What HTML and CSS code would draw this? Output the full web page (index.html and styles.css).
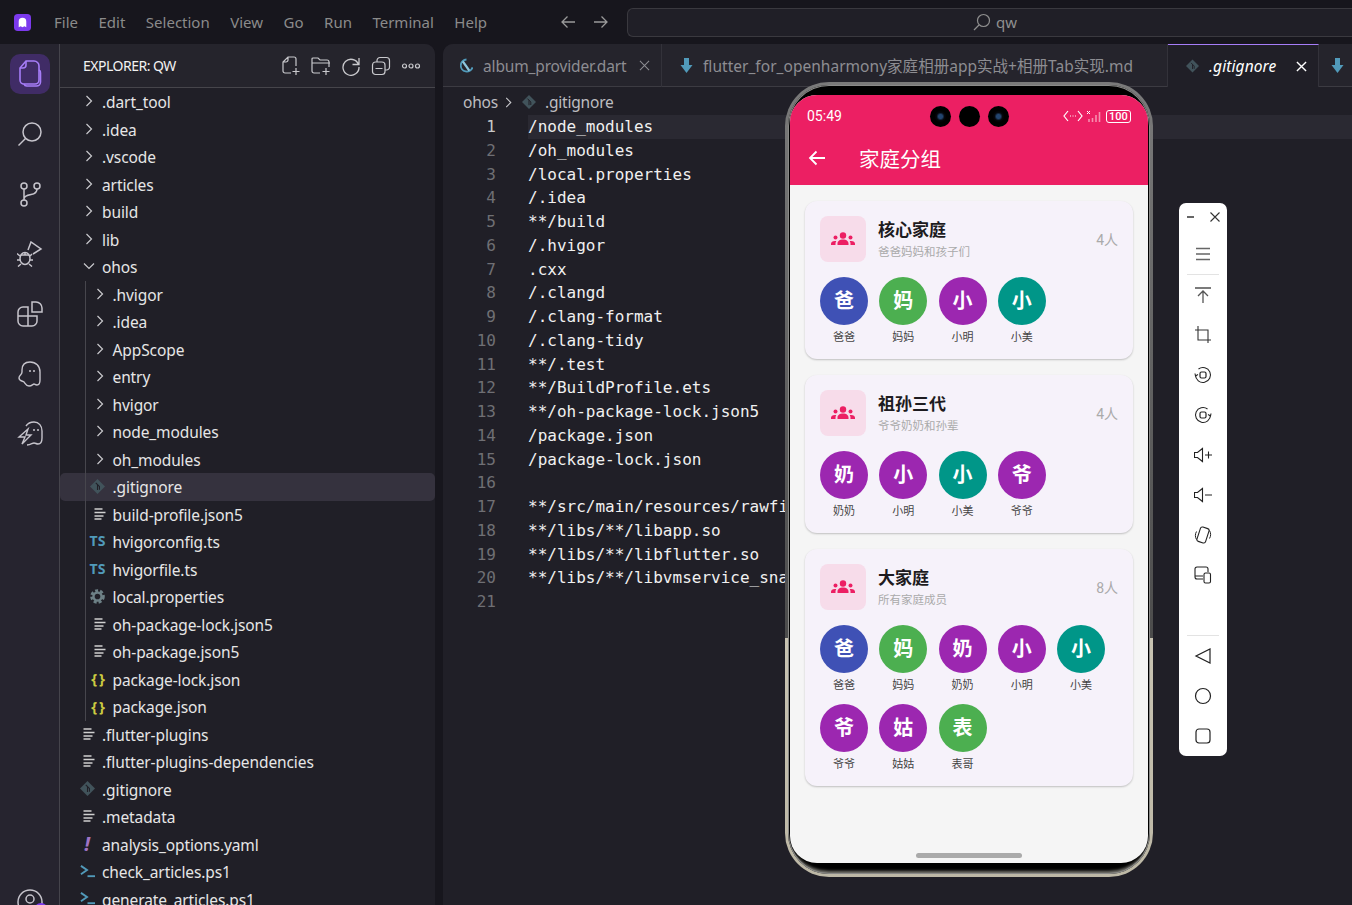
FILE: index.html
```html
<!DOCTYPE html>
<html lang="en">
<head>
    <meta charset="UTF-8">
    <meta name="viewport" content="width=device-width, initial-scale=1.0">
    <title>qw - Editor</title>
    <link rel="stylesheet" href="styles.css">
</head>
<body>
    <svg class="sprite" xmlns="http://www.w3.org/2000/svg">
        <symbol id="i-right" viewBox="0 0 12 12"><path d="M3.5 1l5 5-5 5" fill="none" stroke="currentColor" stroke-width="1.2"/></symbol>
        <symbol id="i-down" viewBox="0 0 12 12"><path d="M1 3.5l5 5 5-5" fill="none" stroke="currentColor" stroke-width="1.2"/></symbol>
        <symbol id="i-lines" viewBox="0 0 12 12"><path d="M0.500 1h8M0.500 4.500h11M0.500 8h9M0.500 11h7" fill="none" stroke="#cfcfcf" stroke-width="1.500"/></symbol>
        <symbol id="i-git" viewBox="0 0 14 14"><path d="M7 0l7 7-7 7-7-7z" fill="#41535b"/><path d="M5.4 3.6l3.4 3.4v3M7 5.2v5" fill="none" stroke="#201f27" stroke-width="1"/></symbol>
        <symbol id="i-gear" viewBox="0 0 16 16"><circle cx="8" cy="8" r="6" fill="none" stroke="#6d8086" stroke-width="3.600" stroke-dasharray="3 2.030"/><circle cx="8" cy="8" r="4.300" fill="none" stroke="#6d8086" stroke-width="2.600"/></symbol>
        <symbol id="i-ps" viewBox="0 0 16 14"><path d="M1 1l6.500 4.500L1 10" fill="none" stroke="#519aba" stroke-width="2"/><path d="M8 12h8" stroke="#519aba" stroke-width="2"/></symbol>
        <symbol id="i-md" viewBox="0 0 12 16"><path d="M3.500 0h5v7H12l-6 8-6-8h3.500z" fill="#519aba"/></symbol>
        <symbol id="i-group" viewBox="0 0 24 14"><circle cx="12" cy="3.500" r="3.200"/><circle cx="4.500" cy="5.500" r="2"/><circle cx="19.500" cy="5.500" r="2"/><path d="M6.500 13v-1.500c0-2.500 2.500-4 5.500-4s5.500 1.500 5.500 4V13zM0 13v-1.200c0-1.600 1.400-2.800 4-2.800.5 0 .9 0 1.300.1-.5.700-.8 1.500-.8 2.400V13zM24 13v-1.200c0-1.600-1.400-2.800-4-2.800-.5 0-.9 0-1.300.1.500.700.8 1.500.8 2.400V13z"/></symbol>
    </svg>

    <header class="topbar">
        <svg class="logo" viewBox="0 0 18 18"><rect width="18" height="18" rx="4" fill="#7c3aed"/><path d="M5 14V8a4 4 0 0 1 8 0v6l-2-1-2 1-2-1z" fill="#fff"/></svg>
        <nav class="menu">
            <span>File</span><span>Edit</span><span>Selection</span><span>View</span><span>Go</span><span>Run</span><span>Terminal</span><span>Help</span>
        </nav>
        <div class="history">
            <svg viewBox="0 0 16 16"><path d="M15 8H2M7.500 2.500L2 8l5.500 5.500" fill="none" stroke="currentColor" stroke-width="1.300"/></svg>
            <svg viewBox="0 0 16 16"><path d="M1 8h13M8.500 2.500L14 8l-5.500 5.500" fill="none" stroke="currentColor" stroke-width="1.300"/></svg>
        </div>
        <div class="searchbox">
            <svg viewBox="0 0 18 18"><circle cx="10.500" cy="7.500" r="6" fill="none" stroke="currentColor" stroke-width="1.200"/><path d="M6 12l-5 5" stroke="currentColor" stroke-width="1.200"/></svg>
            <span>qw</span>
        </div>
    </header>

    <div class="workbench">
        <aside class="activity">
            <div class="act act-on">
                <svg viewBox="0 0 24 28" width="24" height="28"><path d="M8 1h8a5 5 0 0 1 5 5v14a4 4 0 0 1-4 4H6a4 4 0 0 1-4-4V8z" fill="none" stroke="#a67df8" stroke-width="1.600"/><path d="M8 1v4a3 3 0 0 1-3 3H2" fill="none" stroke="#a67df8" stroke-width="1.600"/><path d="M21 10a3 3 0 0 1 1.500 3v9a4 4 0 0 1-4 4H9a3 3 0 0 1-3-2" fill="none" stroke="#a67df8" stroke-width="1.600"/></svg>
            </div>
            <div class="act">
                <svg viewBox="0 0 26 26" width="26" height="26"><circle cx="15" cy="11" r="9" fill="none" stroke="currentColor" stroke-width="1.500"/><path d="M8.500 17.500L1.500 24.500" stroke="currentColor" stroke-width="1.500"/></svg>
            </div>
            <div class="act">
                <svg viewBox="0 0 22 26" width="22" height="26"><circle cx="5" cy="5" r="3" fill="none" stroke="currentColor" stroke-width="1.500"/><circle cx="18" cy="5" r="3" fill="none" stroke="currentColor" stroke-width="1.500"/><circle cx="5" cy="22" r="3" fill="none" stroke="currentColor" stroke-width="1.500"/><path d="M5 8v11M18 8c0 4-3 5-6 5.500S5 15 5 18" fill="none" stroke="currentColor" stroke-width="1.500"/></svg>
            </div>
            <div class="act">
                <svg viewBox="0 0 26 26" width="26" height="26"><path d="M11 9l3-8 10 7-8 5" fill="none" stroke="currentColor" stroke-width="1.500"/><ellipse cx="8" cy="17.500" rx="5" ry="6" fill="none" stroke="currentColor" stroke-width="1.500"/><path d="M3 15L0 12.500M3 19H0M4 23l-3 2.500M13 15l2-2M13 19h3M12 23l3 2.500M4 14h8M8 12v2" fill="none" stroke="currentColor" stroke-width="1.500"/></svg>
            </div>
            <div class="act">
                <svg viewBox="0 0 26 26" width="26" height="26"><path d="M11 6H6a5 5 0 0 0-5 5v9a5 5 0 0 0 5 5h9a5 5 0 0 0 5-5v-5H11zM1 15h10M11 15v10" fill="none" stroke="currentColor" stroke-width="1.500"/><path d="M15 1h4a6 6 0 0 1 6 6v4H15z" fill="none" stroke="currentColor" stroke-width="1.500"/></svg>
            </div>
            <div class="act">
                <svg viewBox="0 0 24 26" width="24" height="26"><path d="M12 1c6 0 10 4 10 10v8c0 3-1 5-3 5s-2-1-3-1-2 2-5 2-4-3-5-4-5-1-5-4 3-3 3-6V9c0-5 3-8 8-8z" fill="none" stroke="currentColor" stroke-width="1.400"/><path d="M12 9v2M16 9v2" stroke="currentColor" stroke-width="1.500"/></svg>
            </div>
            <div class="act">
                <svg viewBox="0 0 26 26" width="26" height="26"><path d="M9 5c2-3 5-4 8-4 5 0 8 4 8 9v7c0 4-2 6-4 6s-2-1-4-1-3 2-7 2" fill="none" stroke="currentColor" stroke-width="1.400"/><path d="M11 8L2 16h6l-3 7 9-9H9z" fill="none" stroke="currentColor" stroke-width="1.400"/><path d="M17 8v2M21 8v2" stroke="currentColor" stroke-width="1.500"/></svg>
            </div>
            <div class="account">
                <svg viewBox="0 0 26 26" width="26" height="26"><circle cx="13" cy="13" r="12" fill="none" stroke="currentColor" stroke-width="1.500"/><circle cx="13" cy="10" r="4" fill="none" stroke="currentColor" stroke-width="1.500"/></svg>
                <i class="account-badge"></i>
            </div>
        </aside>

        <section class="explorer">
            <div class="explorer-head">
                <h2>EXPLORER: QW</h2>
                <div class="explorer-tools">
                    <svg viewBox="0 0 20 20"><path d="M10 17H4a2 2 0 0 1-2-2V6l5-5h6a2 2 0 0 1 2 2v7M7 1v3a2 2 0 0 1-2 2H2M15 12v7M11.500 15.500h7" fill="none" stroke="currentColor" stroke-width="1.200"/></svg>
                    <svg viewBox="0 0 20 20"><path d="M9 17H3a2 2 0 0 1-2-2V3a1 1 0 0 1 1-1h5l2 2h7a2 2 0 0 1 2 2v5M1 7h18M15 12v7M11.500 15.500h7" fill="none" stroke="currentColor" stroke-width="1.200"/></svg>
                    <svg viewBox="0 0 20 20"><path d="M17.500 8.500A8 8 0 1 0 18 11M18 2v6.500h-6.500" fill="none" stroke="currentColor" stroke-width="1.300"/></svg>
                    <svg viewBox="0 0 20 20"><rect x="1.500" y="6" width="12.500" height="12.500" rx="3" fill="none" stroke="currentColor" stroke-width="1.200"/><path d="M6 6V4.500a3 3 0 0 1 3-3h6.500a3 3 0 0 1 3 3V11a3 3 0 0 1-3 3H14M4.500 12.500h7" fill="none" stroke="currentColor" stroke-width="1.200"/></svg>
                    <svg viewBox="0 0 20 20"><circle cx="3.500" cy="10" r="2" fill="none" stroke="currentColor" stroke-width="1.200"/><circle cx="10" cy="10" r="2" fill="none" stroke="currentColor" stroke-width="1.200"/><circle cx="16.500" cy="10" r="2" fill="none" stroke="currentColor" stroke-width="1.200"/></svg>
                </div>
            </div>

            <div class="tree">
                <div class="row"><span class="slot"><svg class="chev"><use href="#i-right"/></svg></span>.dart_tool</div>
                <div class="row"><span class="slot"><svg class="chev"><use href="#i-right"/></svg></span>.idea</div>
                <div class="row"><span class="slot"><svg class="chev"><use href="#i-right"/></svg></span>.vscode</div>
                <div class="row"><span class="slot"><svg class="chev"><use href="#i-right"/></svg></span>articles</div>
                <div class="row"><span class="slot"><svg class="chev"><use href="#i-right"/></svg></span>build</div>
                <div class="row"><span class="slot"><svg class="chev"><use href="#i-right"/></svg></span>lib</div>
                <div class="row"><span class="slot"><svg class="chev"><use href="#i-down"/></svg></span>ohos</div>
                <div class="nested">
                    <div class="row"><span class="slot"><svg class="chev"><use href="#i-right"/></svg></span>.hvigor</div>
                    <div class="row"><span class="slot"><svg class="chev"><use href="#i-right"/></svg></span>.idea</div>
                    <div class="row"><span class="slot"><svg class="chev"><use href="#i-right"/></svg></span>AppScope</div>
                    <div class="row"><span class="slot"><svg class="chev"><use href="#i-right"/></svg></span>entry</div>
                    <div class="row"><span class="slot"><svg class="chev"><use href="#i-right"/></svg></span>hvigor</div>
                    <div class="row"><span class="slot"><svg class="chev"><use href="#i-right"/></svg></span>node_modules</div>
                    <div class="row"><span class="slot"><svg class="chev"><use href="#i-right"/></svg></span>oh_modules</div>
                    <div class="row row-on"><span class="slot slot-file"><svg class="ico"><use href="#i-git"/></svg></span>.gitignore</div>
                    <div class="row"><span class="slot"><svg class="chev"><use href="#i-lines"/></svg></span>build-profile.json5</div>
                    <div class="row"><span class="slot slot-file ts">TS</span>hvigorconfig.ts</div>
                    <div class="row"><span class="slot slot-file ts">TS</span>hvigorfile.ts</div>
                    <div class="row"><span class="slot slot-file"><svg class="ico"><use href="#i-gear"/></svg></span>local.properties</div>
                    <div class="row"><span class="slot"><svg class="chev"><use href="#i-lines"/></svg></span>oh-package-lock.json5</div>
                    <div class="row"><span class="slot"><svg class="chev"><use href="#i-lines"/></svg></span>oh-package.json5</div>
                    <div class="row"><span class="slot slot-file braces">{ }</span>package-lock.json</div>
                    <div class="row"><span class="slot slot-file braces">{ }</span>package.json</div>
                </div>
                <div class="row"><span class="slot"><svg class="chev"><use href="#i-lines"/></svg></span>.flutter-plugins</div>
                <div class="row"><span class="slot"><svg class="chev"><use href="#i-lines"/></svg></span>.flutter-plugins-dependencies</div>
                <div class="row"><span class="slot slot-file"><svg class="ico"><use href="#i-git"/></svg></span>.gitignore</div>
                <div class="row"><span class="slot"><svg class="chev"><use href="#i-lines"/></svg></span>.metadata</div>
                <div class="row"><span class="slot slot-file bang">!</span>analysis_options.yaml</div>
                <div class="row"><span class="slot slot-file"><svg class="ico"><use href="#i-ps"/></svg></span>check_articles.ps1</div>
                <div class="row"><span class="slot slot-file"><svg class="ico"><use href="#i-ps"/></svg></span>generate_articles.ps1</div>
            </div>
        </section>

        <main class="editor">
            <div class="tabs">
                <div class="tab tab-dart">
                    <svg class="tab-ico" viewBox="0 0 14 16"><path d="M7 1a6.500 6.500 0 1 0 6.500 8.500" fill="none" stroke="#519aba" stroke-width="2"/><path d="M3 3l7 10" stroke="#8ec6dd" stroke-width="2.500"/></svg>
                    <span>album_provider.dart</span>
                    <svg class="tab-x" viewBox="0 0 12 12"><path d="M1 1l10 10M11 1L1 11" stroke="currentColor" stroke-width="1.100"/></svg>
                </div>
                <div class="tab tab-md">
                    <svg class="tab-ico"><use href="#i-md"/></svg>
                    <span>flutter_for_openharmony家庭相册app实战+相册Tab实现.md</span>
                </div>
                <div class="tab tab-on">
                    <svg class="tab-ico"><use href="#i-git"/></svg>
                    <span>.gitignore</span>
                    <svg class="tab-x" viewBox="0 0 12 12"><path d="M1 1l10 10M11 1L1 11" stroke="currentColor" stroke-width="1.500"/></svg>
                </div>
                <div class="tab tab-rest">
                    <svg class="tab-ico"><use href="#i-md"/></svg>
                </div>
            </div>
            <div class="crumbs">
                <span>ohos</span>
                <svg class="crumb-sep"><use href="#i-right"/></svg>
                <svg class="crumb-ico"><use href="#i-git"/></svg>
                <span>.gitignore</span>
            </div>
            <div class="code">
                <div class="line line-on"><b>1</b><code>/node_modules</code></div>
                <div class="line"><b>2</b><code>/oh_modules</code></div>
                <div class="line"><b>3</b><code>/local.properties</code></div>
                <div class="line"><b>4</b><code>/.idea</code></div>
                <div class="line"><b>5</b><code>**/build</code></div>
                <div class="line"><b>6</b><code>/.hvigor</code></div>
                <div class="line"><b>7</b><code>.cxx</code></div>
                <div class="line"><b>8</b><code>/.clangd</code></div>
                <div class="line"><b>9</b><code>/.clang-format</code></div>
                <div class="line"><b>10</b><code>/.clang-tidy</code></div>
                <div class="line"><b>11</b><code>**/.test</code></div>
                <div class="line"><b>12</b><code>**/BuildProfile.ets</code></div>
                <div class="line"><b>13</b><code>**/oh-package-lock.json5</code></div>
                <div class="line"><b>14</b><code>/package.json</code></div>
                <div class="line"><b>15</b><code>/package-lock.json</code></div>
                <div class="line"><b>16</b><code></code></div>
                <div class="line"><b>17</b><code>**/src/main/resources/rawfile</code></div>
                <div class="line"><b>18</b><code>**/libs/**/libapp.so</code></div>
                <div class="line"><b>19</b><code>**/libs/**/libflutter.so</code></div>
                <div class="line"><b>20</b><code>**/libs/**/libvmservice_snapshot.so</code></div>
                <div class="line"><b>21</b><code></code></div>
            </div>
        </main>
    </div>

    <!-- emulator window -->
    <div class="phone">
        <div class="bezel">
            <div class="screen">
                <div class="appbar">
                    <div class="status">
                        <span class="clock">05:49</span>
                        <div class="cams"><i class="cam"></i><i class="cam cam-plain"></i><i class="cam"></i></div>
                        <div class="status-icons">
                            <svg width="20" height="12" viewBox="0 0 20 12"><path d="M5 1L1 6l4 5M15 1l4 5-4 5" fill="none" stroke="#fff" stroke-width="1.200"/><path d="M7 6h1M9.500 6h1M12 6h1" stroke="#fff" stroke-width="1.200"/></svg>
                            <svg width="17" height="12" viewBox="0 0 17 12"><path d="M1 1l3 3M4 1L1 4" stroke="#fff" stroke-width="1"/><path d="M3 12V9M6.500 12V8M10 12V5M13.500 12V2" stroke="#f78fb0" stroke-width="1.600"/></svg>
                            <span class="battery">100</span>
                        </div>
                    </div>
                    <div class="appbar-title">
                        <svg width="18" height="16" viewBox="0 0 18 16"><path d="M17 8H2M8.500 1.500L2 8l6.500 6.500" fill="none" stroke="#fff" stroke-width="1.800"/></svg>
                        <h1>家庭分组</h1>
                    </div>
                </div>

                <div class="groups">
                    <article class="card">
                        <div class="card-head">
                            <div class="card-icon"><svg><use href="#i-group"/></svg></div>
                            <div class="card-text"><h3>核心家庭</h3><p>爸爸妈妈和孩子们</p></div>
                            <span class="card-count">4人</span>
                        </div>
                        <div class="members">
                            <div class="member"><div class="avatar blue">爸</div><span>爸爸</span></div>
                            <div class="member"><div class="avatar green">妈</div><span>妈妈</span></div>
                            <div class="member"><div class="avatar purple">小</div><span>小明</span></div>
                            <div class="member"><div class="avatar teal">小</div><span>小美</span></div>
                        </div>
                    </article>
                    <article class="card">
                        <div class="card-head">
                            <div class="card-icon"><svg><use href="#i-group"/></svg></div>
                            <div class="card-text"><h3>祖孙三代</h3><p>爷爷奶奶和孙辈</p></div>
                            <span class="card-count">4人</span>
                        </div>
                        <div class="members">
                            <div class="member"><div class="avatar purple">奶</div><span>奶奶</span></div>
                            <div class="member"><div class="avatar purple">小</div><span>小明</span></div>
                            <div class="member"><div class="avatar teal">小</div><span>小美</span></div>
                            <div class="member"><div class="avatar purple">爷</div><span>爷爷</span></div>
                        </div>
                    </article>
                    <article class="card">
                        <div class="card-head">
                            <div class="card-icon"><svg><use href="#i-group"/></svg></div>
                            <div class="card-text"><h3>大家庭</h3><p>所有家庭成员</p></div>
                            <span class="card-count">8人</span>
                        </div>
                        <div class="members">
                            <div class="member"><div class="avatar blue">爸</div><span>爸爸</span></div>
                            <div class="member"><div class="avatar green">妈</div><span>妈妈</span></div>
                            <div class="member"><div class="avatar purple">奶</div><span>奶奶</span></div>
                            <div class="member"><div class="avatar purple">小</div><span>小明</span></div>
                            <div class="member"><div class="avatar teal">小</div><span>小美</span></div>
                            <div class="member"><div class="avatar purple">爷</div><span>爷爷</span></div>
                            <div class="member"><div class="avatar purple">姑</div><span>姑姑</span></div>
                            <div class="member"><div class="avatar green">表</div><span>表哥</span></div>
                        </div>
                    </article>
                </div>
                <div class="homebar"></div>
            </div>
        </div>
    </div>

    <!-- emulator side toolbar -->
    <div class="toolbar">
        <div class="toolbar-head">
            <svg width="12" height="12" viewBox="0 0 12 12"><path d="M2 6h7" stroke="#333" stroke-width="1.500"/></svg>
            <svg width="12" height="12" viewBox="0 0 12 12"><path d="M1.500 1.500l9 9M10.500 1.500l-9 9" stroke="#333" stroke-width="1.100"/></svg>
        </div>
        <div class="tool"><svg viewBox="0 0 18 18"><path d="M2 3.500h14M2 9h14M2 14.500h14" stroke="#666" stroke-width="1.500"/></svg></div>
        <hr>
        <div class="tool"><svg viewBox="0 0 18 18"><path d="M1 2h16" stroke="#222" stroke-width="1.200"/><path d="M9 17V5M4 10l5-5 5 5" fill="none" stroke="#555" stroke-width="1.300"/></svg></div>
        <div class="tool"><svg viewBox="0 0 18 18"><path d="M4 0v14h13M1 4h13v13" fill="none" stroke="#333" stroke-width="1.100"/></svg></div>
        <div class="tool"><svg viewBox="0 0 18 18"><path d="M1.500 9a7.500 7.500 0 1 0 3-6M1 7.500L1.500 10 4 8.500" fill="none" stroke="#222" stroke-width="1.100"/><rect x="6" y="6" width="6" height="6" rx="1.500" fill="none" stroke="#222" stroke-width="1.200"/></svg></div>
        <div class="tool"><svg viewBox="0 0 18 18"><path d="M16.500 9a7.500 7.500 0 1 1-3-6M17 7.500L16.500 10 14 8.500" fill="none" stroke="#222" stroke-width="1.100"/><rect x="6" y="6" width="6" height="6" rx="1.500" fill="none" stroke="#222" stroke-width="1.200"/></svg></div>
        <div class="tool"><svg viewBox="0 0 18 18"><path d="M0.500 6.500h3l5-4v13l-5-4h-3zM11 9h7M14.500 5.500v7" fill="none" stroke="#222" stroke-width="1.100"/></svg></div>
        <div class="tool"><svg viewBox="0 0 18 18"><path d="M0.500 6.500h3l5-4v13l-5-4h-3zM11 9h7" fill="none" stroke="#222" stroke-width="1.100"/></svg></div>
        <div class="tool"><svg viewBox="0 0 18 18"><rect x="4.500" y="1.500" width="9" height="15" rx="2" transform="rotate(18 9 9)" fill="none" stroke="#222" stroke-width="1.100"/><path d="M2.500 5.500C1 8 1 11 2.500 13.500M15.500 4.500C17 7 17 10 15.500 12.500" fill="none" stroke="#222" stroke-width="1"/></svg></div>
        <div class="tool"><svg viewBox="0 0 18 18"><path d="M9 13H3a2 2 0 0 1-2-2V3a2 2 0 0 1 2-2h9a2 2 0 0 1 2 2v3M1 10h8" fill="none" stroke="#222" stroke-width="1.100"/><rect x="10" y="7" width="6.500" height="10" rx="1.500" fill="none" stroke="#222" stroke-width="1.100"/></svg></div>
        <div class="tool-gap"></div>
        <hr>
        <div class="tool"><svg viewBox="0 0 18 18"><path d="M16 2v14L2 9z" fill="none" stroke="#222" stroke-width="1.200"/></svg></div>
        <div class="tool"><svg viewBox="0 0 18 18"><circle cx="9" cy="9" r="7.500" fill="none" stroke="#222" stroke-width="1.200"/></svg></div>
        <div class="tool"><svg viewBox="0 0 18 18"><rect x="2" y="2" width="14" height="14" rx="3" fill="none" stroke="#222" stroke-width="1.200"/></svg></div>
    </div>
</body>
</html>
```

FILE: styles.css
```css
:root {
    --bg-top: #17161d;
    --bg-panel: #201f27;
    --bg-side: #26242f;
    --line: #3c3b42;
    --text: #e6e6e6;
    --muted: #8b8b8b;
    --accent: #a67df8;
    --pink: #ec1f63;
}

* {
    margin: 0;
    padding: 0;
    box-sizing: border-box;
}

html, body {
    height: 905px;
    overflow: hidden;
}

body {
    position: relative;
    background-color: var(--bg-top);
    color: var(--text);
    font-family: "Noto Sans", "Noto Sans CJK SC", sans-serif;
}

.sprite {
    display: none;
}

/* top bar */
.topbar {
    display: flex;
    align-items: center;
    height: 44px;
    padding-left: 14px;
}

.logo {
    width: 17px;
    height: 17px;
    flex: none;
}

.menu {
    display: flex;
    gap: 20.500px;
    margin-left: 23px;
    width: 486px;
    font-size: 15px;
    color: var(--muted);
}

.history {
    display: flex;
    gap: 17px;
    color: #9a9a9a;
    margin-left: 20px;
}

.history svg {
    width: 16px;
    height: 16px;
}

.searchbox {
    display: flex;
    align-items: center;
    justify-content: center;
    gap: 5px;
    flex: 1;
    height: 29px;
    margin-left: 18px;
    padding-left: 10px;
    background-color: #201f27;
    border: 1px solid #3a393f;
    border-right: 0;
    border-radius: 6px 0 0 6px;
    color: #8f8f8f;
    font-size: 15px;
}

.searchbox svg {
    width: 18px;
    height: 18px;
}

/* main columns */
.workbench {
    display: flex;
    height: 861px;
}

.activity {
    position: relative;
    flex: none;
    width: 60px;
    padding-top: 10px;
    background-color: var(--bg-side);
    border-right: 1px solid #45444c;
    color: #c6c4cc;
}

.act {
    display: flex;
    align-items: center;
    justify-content: center;
    width: 40px;
    height: 40px;
    margin: 0 0 20px 10px;
}

.act-on {
    background-color: #402c66;
    border-radius: 10px;
}

.account {
    position: absolute;
    left: 17px;
    bottom: -15px;
}

.account-badge {
    position: absolute;
    right: -5px;
    top: 14px;
    width: 14px;
    height: 14px;
    border-radius: 50%;
    background-color: #7c3aed;
}

.explorer {
    flex: none;
    width: 375px;
    background-color: var(--bg-panel);
    border-top-right-radius: 10px;
}

.explorer-head {
    display: flex;
    align-items: center;
    justify-content: space-between;
    height: 44px;
    padding: 0 14px 0 23px;
    border-bottom: 1px solid #46454b;
    background-color: #25242c;
    border-top-right-radius: 10px;
}

.explorer-head h2 {
    font-size: 14px;
    font-weight: 400;
    color: #f2f2f2;
    letter-spacing: -0.5px;
}

.explorer-tools {
    display: flex;
    gap: 10px;
    color: #c9c9cd;
}

.explorer-tools svg {
    width: 20px;
    height: 20px;
}

.tree {
    font-size: 15.500px;
    letter-spacing: -0.1px;
}

.row {
    display: flex;
    align-items: center;
    height: 27.500px;
    padding-left: 19px;
    padding-top: 2px;
    white-space: nowrap;
    line-height: 1;
}

.nested {
    position: relative;
}

.nested::before {
    content: "";
    position: absolute;
    left: 25px;
    top: 0;
    bottom: 0;
    width: 1px;
    background-color: #47464d;
    z-index: 1;
}

.nested .row {
    padding-left: 29.500px;
}

.row-on {
    background-color: #35323e;
    border-radius: 5px;
}

.slot {
    display: flex;
    align-items: center;
    justify-content: center;
    flex: none;
    width: 20px;
    height: 16px;
    margin-top: -3px;
    margin-right: 3px;
    color: #c9c9cd;
}

.slot-file {
    padding-right: 4px;
}

.chev {
    width: 12px;
    height: 12px;
}

.ico {
    width: 15px;
    height: 15px;
}

.ts {
    color: #519aba;
    font-size: 14px;
    font-weight: 700;
    letter-spacing: 0;
}

.braces {
    color: #cbcb41;
    font-size: 15px;
    font-weight: 700;
    letter-spacing: -1px;
}

.bang {
    color: #a074c4;
    font-size: 20px;
    font-weight: 700;
    font-style: italic;
}

/* editor */
.editor {
    flex: 1;
    min-width: 0;
    margin-left: 8px;
    background-color: var(--bg-panel);
    border-top-left-radius: 10px;
    overflow: hidden;
}

.tabs {
    display: flex;
    height: 43px;
    background-color: #25242c;
    border-bottom: 1px solid var(--line);
    font-size: 15.500px;
    color: #8d8d92;
    white-space: nowrap;
}

.tab {
    display: flex;
    align-items: center;
    flex: none;
    height: 43px;
    border-right: 1px solid #33323a;
}

.tab-ico {
    flex: none;
    width: 13px;
    height: 16px;
}

.tab-x {
    flex: none;
    width: 11px;
    height: 11px;
}

.tab-dart {
    width: 219px;
    padding-left: 17px;
}

.tab-dart span {
    margin-left: 10px;
    width: 150px;
    letter-spacing: -0.15px;
}

.tab-dart .tab-x {
    margin-left: 6px;
}

.tab-md {
    width: 506px;
    padding-left: 18px;
}

.tab-md span {
    margin-left: 10px;
    letter-spacing: 0.03px;
}

.tab-on {
    width: 151px;
    padding-left: 18px;
    background-color: var(--bg-panel);
    border-top: 1px solid var(--accent);
    color: #fff;
    font-style: italic;
}

.tab-on span {
    margin-left: 10px;
    width: 82px;
    letter-spacing: 0.1px;
}

.tab-on .tab-x {
    margin-left: 5px;
}

.tab-rest {
    padding-left: 12px;
    border-right: 0;
}

.crumbs {
    display: flex;
    align-items: center;
    height: 28px;
    padding-top: 2px;
    padding-left: 20px;
    font-size: 15.500px;
    letter-spacing: -0.2px;
    color: #bdbdc0;
}

.crumb-sep {
    width: 11px;
    height: 11px;
    margin-left: 5px;
    color: #c9c9cd;
}

.crumb-ico {
    width: 14px;
    height: 14px;
    margin: 0 9px 0 8px;
}

.code {
    height: 700px;
}

.line {
    display: flex;
    height: 23.750px;
    line-height: 23.750px;
    font-family: "DejaVu Sans Mono", monospace;
    font-size: 16px;
    white-space: nowrap;
}

.line b {
    flex: none;
    width: 53px;
    margin-right: 32px;
    text-align: right;
    font-weight: 400;
    color: #6f6f74;
}

.line code {
    font-family: inherit;
    flex: 1;
    color: #f0f0f0;
}

.line-on b {
    color: #c8c8c8;
}

.line-on code {
    background-color: #2a2932;
}

/* phone */
.phone {
    position: absolute;
    left: 785px;
    top: 82px;
    width: 368px;
    height: 795px;
    padding: 3px;
    border-radius: 44px;
    background: linear-gradient(to bottom, #7a7a7a 0, #4c4c4c 70%, #c8c3b2 70%, #bdb8a6 100%);
}

.bezel {
    height: 100%;
    padding: 10px 2px 11px;
    border-radius: 41px;
    background-color: #000;
    box-shadow: inset 0 0 0 1px #8a8a88, inset 0 -5px 3px -2px #77766f;
}

.screen {
    position: relative;
    height: 100%;
    border-radius: 27px;
    overflow: hidden;
    background-color: #f5f5f5;
    font-family: Roboto, "Noto Sans CJK SC", sans-serif;
}

.appbar {
    height: 90px;
    background-color: var(--pink);
    color: #fff;
}

.status {
    position: relative;
    display: flex;
    align-items: center;
    justify-content: space-between;
    height: 42px;
    padding: 0 17px;
    font-size: 14px;
}

.cams {
    position: absolute;
    left: 140px;
    top: 11px;
    display: flex;
    gap: 8px;
}

.cam {
    width: 21px;
    height: 21px;
    border-radius: 50%;
    background: radial-gradient(circle at center, #23456f 0 2px, #05070c 4px, #000 6px);
}

.cam-plain {
    background: #000;
}

.status-icons {
    display: flex;
    align-items: center;
    gap: 3px;
}

.battery {
    width: 25px;
    height: 13px;
    border: 1px solid #fff;
    border-radius: 3px;
    font-size: 11px;
    font-weight: 500;
    line-height: 11px;
    text-align: center;
}

.appbar-title {
    display: flex;
    align-items: center;
    gap: 33px;
    height: 41px;
    padding-left: 18px;
}

.appbar-title h1 {
    font-size: 20.500px;
    font-weight: 400;
}

.groups {
    display: flex;
    flex-direction: column;
    gap: 16px;
    padding: 16px 15px;
}

.card {
    padding: 15px;
    border-radius: 12px;
    background-color: #f6f2fa;
    box-shadow: 0 1px 2px rgba(0, 0, 0, 0.22);
}

.card-head {
    display: flex;
    align-items: center;
    margin-bottom: 14.500px;
}

.card-icon {
    display: flex;
    align-items: center;
    justify-content: center;
    flex: none;
    width: 46px;
    height: 46px;
    margin-right: 12px;
    border-radius: 8px;
    background-color: #f7dcea;
    color: var(--pink);
}

.card-icon svg {
    width: 24px;
    height: 14px;
    fill: currentColor;
}

.card-text {
    flex: 1;
}

.card-text h3 {
    font-size: 17px;
    font-weight: 700;
    line-height: 22px;
    color: #1d1b20;
}

.card-text p {
    margin-top: 3px;
    font-size: 11.500px;
    line-height: 16px;
    color: #aaa;
}

.card-count {
    font-size: 14px;
    color: #aaa;
}

.members {
    display: flex;
    flex-wrap: wrap;
    gap: 11.500px 11.250px;
}

.member {
    width: 48px;
    text-align: center;
}

.member span {
    display: block;
    height: 19.500px;
    font-size: 11px;
    line-height: 26px;
    color: #444;
}

.avatar {
    width: 48px;
    height: 48px;
    border-radius: 50%;
    font-size: 20px;
    font-weight: 700;
    line-height: 48px;
    color: #fff;
}

.blue { background-color: #3f51b5; }
.green { background-color: #4caf50; }
.purple { background-color: #9c27b0; }
.teal { background-color: #009688; }

.homebar {
    position: absolute;
    left: 126px;
    bottom: 5px;
    width: 106px;
    height: 5px;
    border-radius: 3px;
    background-color: #aaa;
}

/* side toolbar */
.toolbar {
    position: absolute;
    left: 1179px;
    top: 203px;
    width: 48px;
    height: 553px;
    border-radius: 7px;
    background-color: #fff;
}

.toolbar-head {
    display: flex;
    justify-content: space-between;
    align-items: center;
    height: 31px;
    padding: 0 6px 3px;
}

.tool {
    display: flex;
    align-items: center;
    justify-content: center;
    height: 40px;
}

.tool svg {
    width: 18px;
    height: 18px;
}

.tool-gap {
    height: 40px;
}

.toolbar hr {
    height: 1px;
    margin: 0 8px;
    border: 0;
    background-color: #e3e3e3;
}
```
